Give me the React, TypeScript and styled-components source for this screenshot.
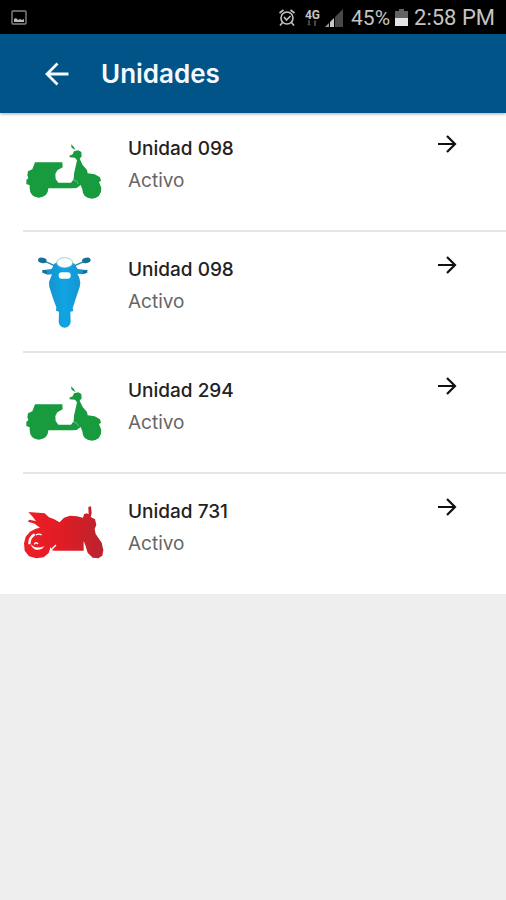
import React from "react";
import styled, { createGlobalStyle } from "styled-components";

const GlobalStyle = createGlobalStyle`
  * { box-sizing: border-box; }
  body {
    margin: 0;
    background: #eeeeee;
    font-family: Inter, "Noto Sans", sans-serif;
  }
`;

const StatusBar = styled.div`
  display: flex;
  align-items: center;
  height: 34px;
  padding: 2px 11px 0;
  background: #000;
  color: #c4c4c4;
  font-family: Roboto, sans-serif;
  font-size: 22px;
  line-height: 32px;
`;

const StatusGroup = styled.div`
  display: flex;
  align-items: center;
  margin-left: auto;
`;

const BatteryLevel = styled.span`
  margin: 0 5px 0 7px;
  font-size: 21px;
`;

const Clock = styled.time`
  margin-left: 6px;
`;

const AppBar = styled.header`
  position: relative;
  z-index: 1;
  display: flex;
  align-items: center;
  height: 79px;
  margin-bottom: -2px;
  padding: 0 24px 0 42px;
  background: #005488;
  color: #f4faff;
  box-shadow: 0 1px 3px rgba(0, 0, 0, 0.35);
`;

const IconButton = styled.button`
  display: flex;
  padding: 0;
  border: 0;
  background: none;
  color: inherit;
  cursor: pointer;
`;

const Title = styled.h1`
  margin: 0 0 0 29px;
  font-size: 26px;
  font-weight: 600;
  line-height: 36px;
`;

const UnitList = styled.ul`
  margin: 0;
  padding: 0;
  list-style: none;
  background: #fff;
`;

const UnitRow = styled.li`
  display: flex;
  align-items: flex-start;
  height: 121px;
  padding: 13px 46px 0 15px;
  background: linear-gradient(#e6e6e6, #e6e6e6) 23px 100% / 100% 2px no-repeat;

  &:last-child {
    height: 120px;
    background: none;
  }
`;

const UnitText = styled.div`
  flex: 1;
  padding: 9px 0 0 13px;
`;

const UnitName = styled.h2`
  margin: 0;
  color: #222;
  font-size: 19px;
  font-weight: 500;
  line-height: 32px;
`;

const UnitState = styled.p`
  margin: 0;
  color: #666;
  font-size: 19px;
  line-height: 32px;
`;

const OpenButton = styled(IconButton)`
  margin-top: 7px;
  color: #111;
`;

function PictureIcon() {
  return (
    <svg width="16" height="16" viewBox="0 0 16 16" aria-hidden="true">
      <rect x="1" y="1" width="14" height="13" rx="1" fill="none" stroke="#858585" strokeWidth="1.4" />
      <path d="M3 12V9l2-1 2 2 2-1 2 1 2-1v3z" fill="#bbb" />
    </svg>
  );
}

function AlarmIcon() {
  return (
    <svg width="18" height="20" viewBox="0 0 18 20" fill="none" stroke="#c4c4c4" strokeWidth="1.6" aria-hidden="true">
      <circle cx="9" cy="10" r="6" />
      <path d="M1.5 5l4-3M16.500 5l-4-3M4.500 14.500L2 17.500M13.500 14.500l2.500 3M6 9l2.500 3 4-4" />
    </svg>
  );
}

const NetworkBox = styled.span`
  display: flex;
  flex-direction: column;
  align-items: center;
  margin: 0 5px 0 9px;
  font-size: 12px;
  font-weight: 700;
  line-height: 10px;
`;

function DataArrows() {
  return (
    <svg width="10" height="6" viewBox="0 0 10 6" fill="#444" aria-hidden="true">
      <path d="M1 0h2v4h1L2 6 0 4h1zM7 6h2V2h1L8 0 6 2h1z" />
    </svg>
  );
}

function SignalIcon() {
  return (
    <svg width="19" height="18" viewBox="0 0 19 18" aria-hidden="true">
      <path d="M0 18L4 14v4z" fill="#999" />
      <path d="M5 13l4-4v9H5z" fill="#c8c8c8" />
      <path d="M10 8l4-4v14h-4zM14 4l4-4v18h-4z" fill="#484848" />
    </svg>
  );
}

function BatteryIcon() {
  return (
    <svg width="13" height="18" viewBox="0 0 13 18" aria-hidden="true">
      <path d="M4 0h5v2h4v7H0V2h4z" fill="#636363" />
      <path d="M0 9h13v8H0z" fill="#e4e4e4" />
    </svg>
  );
}

function BackArrow() {
  return (
    <svg width="30" height="30" viewBox="0 0 30 30" fill="none" stroke="currentColor" strokeWidth="2.800" aria-hidden="true">
      <path d="M26.500 15H5.500M15.500 4.500L5 15l10.500 10.500" />
    </svg>
  );
}

function ForwardArrow() {
  return (
    <svg width="26" height="26" viewBox="0 0 26 26" fill="none" stroke="currentColor" strokeWidth="2.200" aria-hidden="true">
      <path d="M4 13h17M13 5l8 8-8 8" />
    </svg>
  );
}

function Scooter() {
  return (
    <svg width="100" height="90" viewBox="0 -18 300 270" aria-hidden="true">
      <g fill="#179b3e">
        <path d="M60 97H142L143 112L127 121L121 132L122 147L130 158H168L176 148L177 131L181 113L186 91L180 83L164 82L163 77L173 73L177 64L190 61L199 66L200 79L194 86L203 105L216 120L218 130L239 133L255 142L258 152L252 156L259 174Q260 204 230 206Q203 205 202 178L197 165L185 174L173 175H100Q99 202 71 203Q44 200 44 174V166L34 162V150L40 144L37 136L39 124L52 118Z" />
        <path d="M168 43L176 50L182 61L170 53Z" />
      </g>
      <path d="M175 150L185 153L190 162" fill="none" stroke="#8bd09d" strokeWidth="2" />
    </svg>
  );
}

function FrontMotorcycle() {
  return (
    <svg width="100" height="90" viewBox="-30 0 300 270" aria-hidden="true">
      <defs>
        <linearGradient id="frontBlue" x1="0" x2="1">
          <stop offset="0" stopColor="#168fc7" />
          <stop offset=".5" stopColor="#10a4e4" />
          <stop offset="1" stopColor="#168fc7" />
        </linearGradient>
      </defs>
      <path
        d="M88 56L96 52Q102 66 118 68Q134 66 141 52L148 56L158 72L184 75L186 83L171 88L157 86L163 98L166 114L164 126L151 165L143 190L145 198L136 200L137 231Q135 247 119 248Q103 247 101 231L102 200L93 197L94 187L85 163L73 126L72 111L81 88L67 89L53 82L55 75L80 72Z"
        fill="url(#frontBlue)"
      />
      <path d="M62 50L88 62M176 50L149 62" fill="none" stroke="#2787af" strokeWidth="4" />
      <ellipse cx="119" cy="53" rx="24" ry="15" fill="#fff" stroke="#67b8d9" strokeWidth="2" />
      <g fill="#176f99">
        <ellipse cx="52" cy="46" rx="13" ry="8" transform="rotate(12 52 46)" />
        <ellipse cx="184" cy="46" rx="13" ry="8" transform="rotate(-12 184 46)" />
        <path d="M52 74l14 3v10l-14-4zM187 74l-14 3v10l14-4z" />
      </g>
      <rect x="101" y="82" width="36" height="19" rx="9" fill="#fff" />
    </svg>
  );
}

function SportMotorcycle() {
  return (
    <svg width="100" height="90" viewBox="0 -24 300 270" aria-hidden="true">
      <defs>
        <linearGradient id="sportRed" x1="0" x2="1">
          <stop offset="0" stopColor="#ef1e26" />
          <stop offset=".5" stopColor="#df1c25" />
          <stop offset="1" stopColor="#b9242f" />
        </linearGradient>
      </defs>
      <path
        d="M40 51L89 55L102 67L116 72L134 82L147 68L165 62L186 64L204 68L207 58L215 55L221 58L220 36L228 34L230 55L227 66L240 73L244 89L239 102L242 117L260 143L265 165L262 182L250 190L233 188L218 173L211 151L206 138V167H121L110 166L107 155L101 174L86 187L64 190L42 184L29 167L27 145L32 125L45 110L62 101L75 98L59 86L39 80L42 74L63 78L53 65Z"
        fill="url(#sportRed)"
      />
      <path d="M59 118Q43 126 43 148" fill="none" stroke="#fff" strokeWidth="7" />
      <path d="M47 147Q60 164 88 154Q79 167 62 164Q51 160 47 147Z" fill="#fff" />
      <path d="M62 120Q72 115 80 120M58 148Q63 139 69 147" fill="none" stroke="#fff" strokeWidth="4" />
      <path d="M108 165L123 150" stroke="#fff" strokeWidth="4" />
    </svg>
  );
}

const units = [
  { id: 1, name: "Unidad 098", state: "Activo", Vehicle: Scooter },
  { id: 2, name: "Unidad 098", state: "Activo", Vehicle: FrontMotorcycle },
  { id: 3, name: "Unidad 294", state: "Activo", Vehicle: Scooter },
  { id: 4, name: "Unidad 731", state: "Activo", Vehicle: SportMotorcycle },
];

export default function App() {
  return (
    <>
      <GlobalStyle />
      <StatusBar>
        <PictureIcon />
        <StatusGroup>
          <AlarmIcon />
          <NetworkBox>
            4G
            <DataArrows />
          </NetworkBox>
          <SignalIcon />
          <BatteryLevel>45%</BatteryLevel>
          <BatteryIcon />
          <Clock>2:58 PM</Clock>
        </StatusGroup>
      </StatusBar>
      <AppBar>
        <IconButton type="button" aria-label="Volver">
          <BackArrow />
        </IconButton>
        <Title>Unidades</Title>
      </AppBar>
      <main>
        <UnitList>
          {units.map(({ id, name, state, Vehicle }) => (
            <UnitRow key={id}>
              <Vehicle />
              <UnitText>
                <UnitName>{name}</UnitName>
                <UnitState>{state}</UnitState>
              </UnitText>
              <OpenButton type="button" aria-label={`Abrir ${name}`}>
                <ForwardArrow />
              </OpenButton>
            </UnitRow>
          ))}
        </UnitList>
      </main>
    </>
  );
}
